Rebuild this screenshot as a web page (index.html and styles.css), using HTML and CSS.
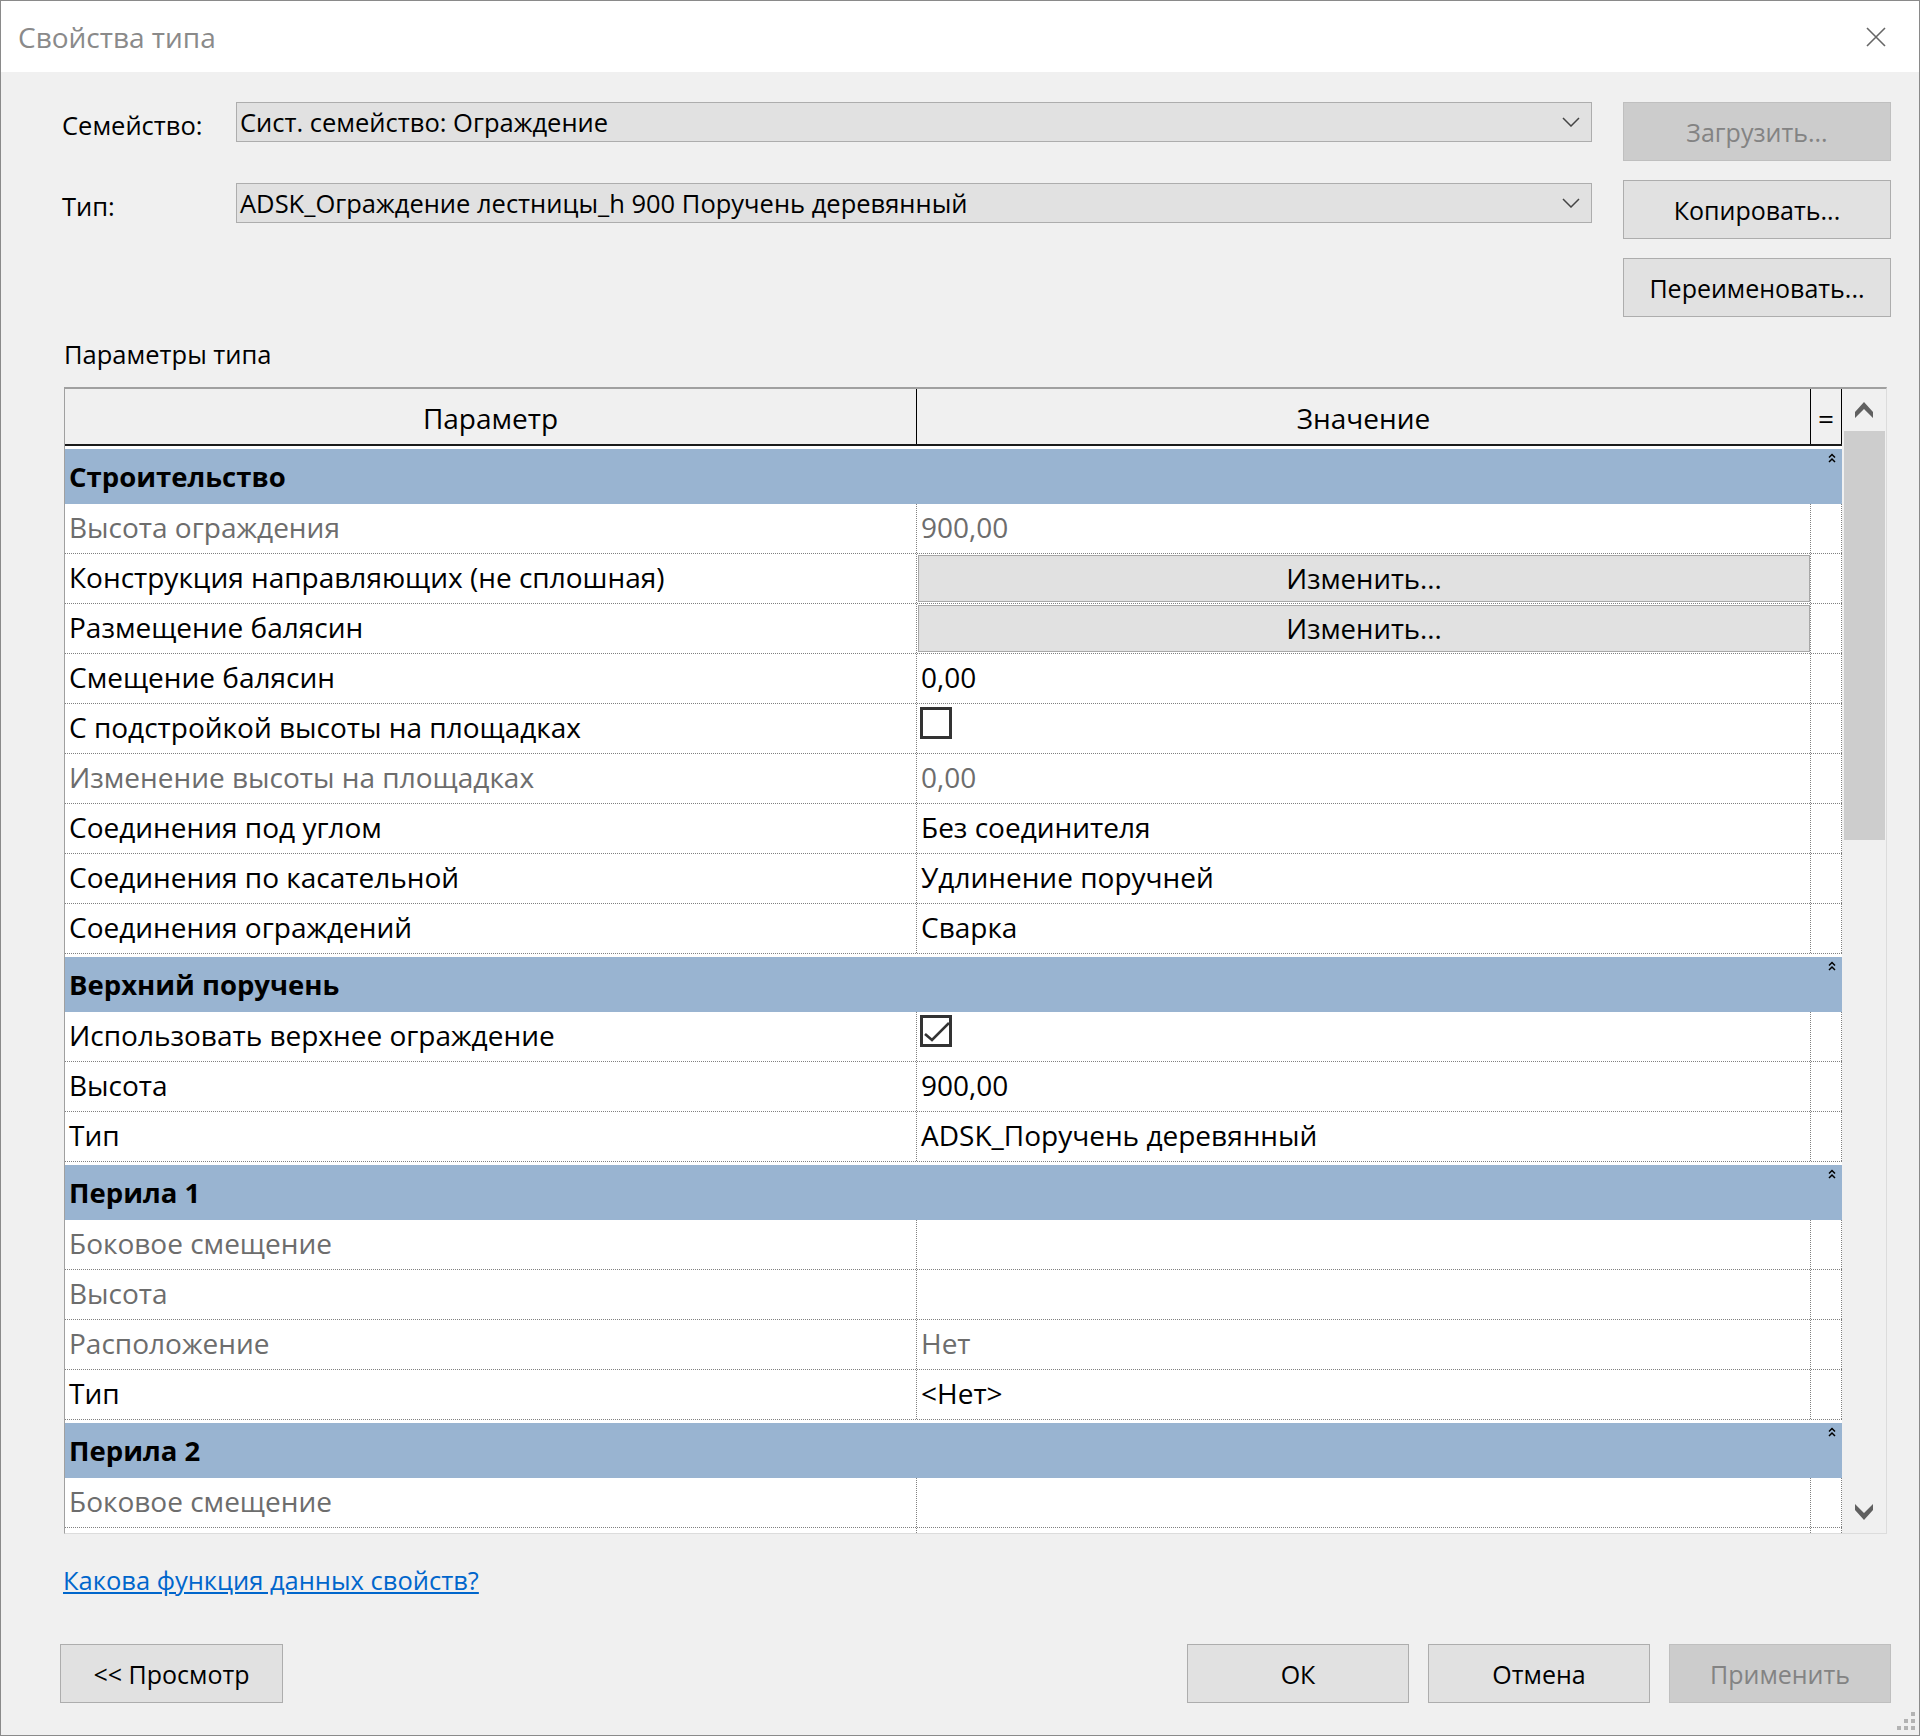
FILE: index.html
```html
<!DOCTYPE html>
<html lang="ru">
<head>
  <meta charset="UTF-8">
  <title>Свойства типа</title>
  <link rel="stylesheet" href="styles.css">
</head>
<body>
  <div class="dialog">
    <!-- Title bar -->
    <div class="titlebar">
      <span class="title">Свойства типа</span>
      <svg class="close" width="20" height="20" viewBox="0 0 20 20">
        <path d="M1 1L19 19M19 1L1 19" stroke="#666" stroke-width="1.6" fill="none"/>
      </svg>
    </div>

    <div class="content">
      <!-- Family / type pickers and side buttons -->
      <div class="top">
        <div class="fields">
          <div class="field-row">
            <label class="field-label">Семейство:</label>
            <div class="select">
              <span>Сист. семейство: Ограждение</span>
              <svg width="18" height="10" viewBox="0 0 18 10"><polyline points="1,1 9,9 17,1" fill="none" stroke="#444" stroke-width="1.5"/></svg>
            </div>
          </div>
          <div class="field-row">
            <label class="field-label">Тип:</label>
            <div class="select">
              <span>ADSK_Ограждение лестницы_h 900 Поручень деревянный</span>
              <svg width="18" height="10" viewBox="0 0 18 10"><polyline points="1,1 9,9 17,1" fill="none" stroke="#444" stroke-width="1.5"/></svg>
            </div>
          </div>
        </div>
        <div class="side-buttons">
          <button class="btn" disabled>Загрузить...</button>
          <button class="btn">Копировать...</button>
          <button class="btn">Переименовать...</button>
        </div>
      </div>

      <div class="section-label">Параметры типа</div>

      <!-- Property grid -->
      <div class="grid-wrap">
        <div class="grid">
          <div class="grid-head">
            <div class="head-cell">Параметр</div>
            <div class="head-cell">Значение</div>
            <div class="head-cell">=</div>
          </div>

          <div class="group">
            <span>Строительство</span>
            <svg class="caret" width="8" height="10" viewBox="0 0 8 10"><polyline points="1,4.5 4,1.5 7,4.5" /><polyline points="1,9 4,6 7,9" /></svg>
          </div>
          <div class="row">
            <div class="cell ro">Высота ограждения</div>
            <div class="cell ro">900,00</div>
            <div class="cell"></div>
          </div>
          <div class="row">
            <div class="cell">Конструкция направляющих (не сплошная)</div>
            <div class="cell cell-btn"><button class="btn">Изменить...</button></div>
            <div class="cell"></div>
          </div>
          <div class="row">
            <div class="cell">Размещение балясин</div>
            <div class="cell cell-btn"><button class="btn">Изменить...</button></div>
            <div class="cell"></div>
          </div>
          <div class="row">
            <div class="cell">Смещение балясин</div>
            <div class="cell">0,00</div>
            <div class="cell"></div>
          </div>
          <div class="row">
            <div class="cell">С подстройкой высоты на площадках</div>
            <div class="cell cell-check"><span class="check"></span></div>
            <div class="cell"></div>
          </div>
          <div class="row">
            <div class="cell ro">Изменение высоты на площадках</div>
            <div class="cell ro">0,00</div>
            <div class="cell"></div>
          </div>
          <div class="row">
            <div class="cell">Соединения под углом</div>
            <div class="cell">Без соединителя</div>
            <div class="cell"></div>
          </div>
          <div class="row">
            <div class="cell">Соединения по касательной</div>
            <div class="cell">Удлинение поручней</div>
            <div class="cell"></div>
          </div>
          <div class="row">
            <div class="cell">Соединения ограждений</div>
            <div class="cell">Сварка</div>
            <div class="cell"></div>
          </div>

          <div class="group">
            <span>Верхний поручень</span>
            <svg class="caret" width="8" height="10" viewBox="0 0 8 10"><polyline points="1,4.5 4,1.5 7,4.5" /><polyline points="1,9 4,6 7,9" /></svg>
          </div>
          <div class="row">
            <div class="cell">Использовать верхнее ограждение</div>
            <div class="cell cell-check">
              <span class="check">
                <svg width="26" height="26" viewBox="0 0 26 26"><polyline points="2,16 9,22 26,5" fill="none" stroke="#333" stroke-width="2.6"/></svg>
              </span>
            </div>
            <div class="cell"></div>
          </div>
          <div class="row">
            <div class="cell">Высота</div>
            <div class="cell">900,00</div>
            <div class="cell"></div>
          </div>
          <div class="row">
            <div class="cell">Тип</div>
            <div class="cell">ADSK_Поручень деревянный</div>
            <div class="cell"></div>
          </div>

          <div class="group">
            <span>Перила 1</span>
            <svg class="caret" width="8" height="10" viewBox="0 0 8 10"><polyline points="1,4.5 4,1.5 7,4.5" /><polyline points="1,9 4,6 7,9" /></svg>
          </div>
          <div class="row">
            <div class="cell ro">Боковое смещение</div>
            <div class="cell"></div>
            <div class="cell"></div>
          </div>
          <div class="row">
            <div class="cell ro">Высота</div>
            <div class="cell"></div>
            <div class="cell"></div>
          </div>
          <div class="row">
            <div class="cell ro">Расположение</div>
            <div class="cell ro">Нет</div>
            <div class="cell"></div>
          </div>
          <div class="row">
            <div class="cell">Тип</div>
            <div class="cell">&lt;Нет&gt;</div>
            <div class="cell"></div>
          </div>

          <div class="group">
            <span>Перила 2</span>
            <svg class="caret" width="8" height="10" viewBox="0 0 8 10"><polyline points="1,4.5 4,1.5 7,4.5" /><polyline points="1,9 4,6 7,9" /></svg>
          </div>
          <div class="row">
            <div class="cell ro">Боковое смещение</div>
            <div class="cell"></div>
            <div class="cell"></div>
          </div>
          <!-- next row is scrolled out of view, only its top edge shows -->
          <div class="row">
            <div class="cell"></div>
            <div class="cell"></div>
            <div class="cell"></div>
          </div>
        </div>

        <!-- Vertical scrollbar -->
        <div class="scrollbar">
          <div class="sb-btn">
            <svg width="18" height="16" viewBox="0 0 18 16"><polygon points="9,0 18,10 18,16 9,7 0,16 0,10" fill="#606060"/></svg>
          </div>
          <div class="sb-thumb"></div>
          <div class="sb-track"></div>
          <div class="sb-btn">
            <svg width="18" height="16" viewBox="0 0 18 16"><polygon points="0,0 9,9 18,0 18,6 9,16 0,6" fill="#606060"/></svg>
          </div>
        </div>
      </div>

      <div class="help">
        <a class="help-link" href="#">Какова функция данных свойств?</a>
      </div>

      <!-- Dialog buttons -->
      <div class="bottom">
        <button class="btn wide">&lt;&lt; Просмотр</button>
        <div class="actions">
          <button class="btn wide">ОК</button>
          <button class="btn wide">Отмена</button>
          <button class="btn wide" disabled>Применить</button>
        </div>
      </div>
    </div>

    <svg class="grip" width="20" height="18" viewBox="0 0 20 18">
      <rect x="16" y="0" width="4" height="4"/>
      <rect x="9" y="7" width="4" height="4"/>
      <rect x="16" y="7" width="4" height="4"/>
      <rect x="2" y="14" width="4" height="4"/>
      <rect x="9" y="14" width="4" height="4"/>
      <rect x="16" y="14" width="4" height="4"/>
    </svg>
  </div>
</body>
</html>
```

FILE: styles.css
```css
/* Whole window */
body {
  margin: 0;
  font-family: "Open Sans", "Noto Sans", sans-serif;
  background-color: #ffffff;
}

.dialog {
  position: relative;
  width: 1920px;
  height: 1736px;
  box-sizing: border-box;
  border: 1px solid #8a8a8a;
  background-color: #f0f0f0;
  display: flex;
  flex-direction: column;
}

/* Title bar */
.titlebar {
  flex: none;
  height: 71px;
  background-color: #ffffff;
  display: flex;
  align-items: center;
  justify-content: space-between;
  padding: 0 33px 0 17px;
}

.title {
  font-size: 28px;
  color: #8a8a8a;
  margin-top: 1px;
}

.content {
  padding: 30px 28px 0 61px;
}

/* Family and type pickers */
.top {
  display: flex;
  gap: 31px;
}

.fields {
  flex: 1;
}

.field-row {
  display: flex;
  align-items: flex-start;
  height: 40px;
  margin-bottom: 41px;
}

.field-label {
  width: 174px;
  flex: none;
  font-size: 25.5px;
  line-height: 40px;
  padding-top: 3px;
}

.select {
  flex: 1;
  height: 40px;
  box-sizing: border-box;
  border: 1px solid #adadad;
  background-color: #e1e1e1;
  display: flex;
  align-items: center;
  justify-content: space-between;
  padding: 0 11px 0 3px;
  font-size: 25.5px;
  white-space: nowrap;
}

.side-buttons {
  width: 268px;
  flex: none;
  display: flex;
  flex-direction: column;
  gap: 19px;
}

/* Buttons */
.btn {
  height: 59px;
  padding: 0;
  font-family: inherit;
  font-size: 25px;
  color: #000000;
  background-color: #e1e1e1;
  border: 1px solid #adadad;
}

.btn:disabled {
  background-color: #cccccc;
  border-color: #bfbfbf;
  color: #838383;
}

.section-label {
  font-size: 25.5px;
  line-height: 34px;
  margin: 20px 0 16px 2px;
}

/* Property grid */
.grid-wrap {
  margin-left: 2px;
  width: 1823px;
  height: 1147px;
  box-sizing: border-box;
  border-top: 2px solid #a0a0a0;
  border-left: 1px solid #a0a0a0;
  border-right: 1px solid #dcdcdc;
  border-bottom: 1px solid #dcdcdc;
  display: flex;
}

.grid {
  width: 1777px;
  flex: none;
  background-color: #ffffff;
  overflow: hidden;
}

.grid-head {
  display: grid;
  grid-template-columns: 852px 894px 31px;
  height: 57px;
  box-sizing: border-box;
  border-bottom: 2px solid #1a1a1a;
  background-color: #f0f0f0;
}

.head-cell {
  border-right: 1px solid #000000;
  display: flex;
  align-items: center;
  justify-content: center;
  font-size: 28px;
  padding-top: 2px;
}

.group {
  margin-top: 3px;
  height: 55px;
  background-color: #99b4d1;
  display: flex;
  align-items: center;
  justify-content: space-between;
  padding: 0 6px 0 4px;
  font-size: 27.5px;
  font-weight: 700;
}

.caret {
  align-self: flex-start;
  margin-top: 4px;
  fill: none;
  stroke: #000000;
  stroke-width: 1.5;
}

.row {
  display: grid;
  grid-template-columns: 852px 894px 31px;
  height: 50px;
  box-sizing: border-box;
  border-bottom: 1px dotted #808080;
  font-size: 28px;
}

.cell {
  border-right: 1px dotted #808080;
  display: flex;
  align-items: center;
  padding: 0 0 4px 4px;
  white-space: nowrap;
  overflow: hidden;
}

/* Read-only values are greyed out */
.ro {
  color: #6d6d6d;
}

.cell-btn {
  padding: 1px 0 1px 1px;
  align-items: stretch;
}

.cell-btn .btn {
  flex: 1;
  height: auto;
  font-size: 27.5px;
  border-color: #a8a8a8;
}

.cell-check {
  align-items: flex-start;
  padding: 0 0 0 3px;
}

.check {
  width: 32px;
  height: 32px;
  box-sizing: border-box;
  margin-top: 3px;
  border: 3px solid #333333;
  background-color: #ffffff;
  display: block;
}

.check svg {
  display: block;
}

/* Scrollbar */
.scrollbar {
  flex: 1;
  display: flex;
  flex-direction: column;
  background-color: #f0f0f0;
}

.sb-btn {
  height: 42px;
  display: flex;
  align-items: center;
  justify-content: center;
}

.sb-thumb {
  height: 409px;
  margin: 0 1px 0 2px;
  background-color: #cdcdcd;
}

.sb-track {
  flex: 1;
}

/* Help link */
.help {
  margin-top: 29px;
}

.help-link {
  font-size: 25.5px;
  line-height: 34px;
  color: #0066cc;
  margin-left: 1px;
}

/* Bottom buttons */
.bottom {
  display: flex;
  justify-content: space-between;
  margin-top: 47px;
}

.actions {
  display: flex;
  gap: 19px;
}

.wide {
  width: 222px;
}

.bottom > .wide {
  margin-left: -2px;
  width: 223px;
}

/* Resize grip in the corner */
.grip {
  position: absolute;
  right: 4px;
  bottom: 5px;
  fill: #b3b3b3;
}
```
